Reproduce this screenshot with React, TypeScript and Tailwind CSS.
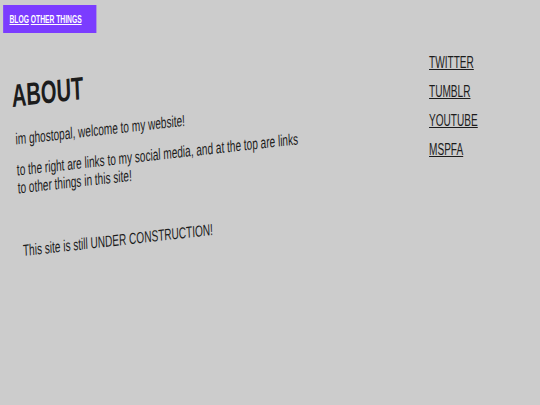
export default function App() {
  return (
    <div className="w-full h-screen overflow-hidden bg-[#cccccc] font-['Liberation_Sans',Arial,sans-serif] text-[#1c1c1c]">
      <div className="w-[857px] h-[405px] origin-top-left scale-x-[0.63] flex">
        <div className="w-[676px] shrink-0 flex flex-col items-start">
          <nav className="ml-[5px] mt-[5px] w-[148px] h-[28px] bg-[#7b3cff] flex items-center pl-[10px] gap-[3px] text-[10.7px] font-bold text-white">
            <a href="#" className="underline">BLOG</a>
            <a href="#" className="underline">OTHER THINGS</a>
          </nav>
          <div className="mt-[40px] ml-[17px] w-[520px] flex flex-col items-start origin-top-left -rotate-[4deg]">
            <h1 className="mt-[5px] text-[32px] leading-[37px] font-bold">ABOUT</h1>
            <div className="ml-[3px] w-[452px] flex flex-col text-[16px] leading-[18.5px]">
              <p className="mt-[16px]">im ghostopal, welcome to my website!</p>
              <p className="mt-[12px]">to the right are links to my social media, and at the top are links to other things in this site!</p>
              <p className="mt-[44px] ml-[4px]">This site is still UNDER CONSTRUCTION!</p>
            </div>
          </div>
        </div>
        <div className="ml-[5px] pt-[48px] flex flex-col items-start text-[16px] leading-[29px]">
          <a href="#" className="underline">TWITTER</a>
          <a href="#" className="underline">TUMBLR</a>
          <a href="#" className="underline">YOUTUBE</a>
          <a href="#" className="underline">MSPFA</a>
        </div>
      </div>
    </div>
  );
}
